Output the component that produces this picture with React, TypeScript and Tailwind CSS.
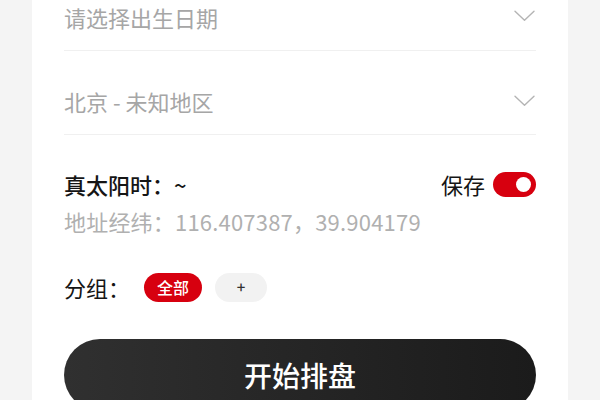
import React from "react";

function Chevron() {
  return (
    <svg width="21" height="12" viewBox="0 0 21 12" fill="none">
      <path d="M1 1.2 L10.5 10.2 L20 1.2" stroke="#b4b4b4" strokeWidth="1.4" strokeLinecap="round" strokeLinejoin="round" />
    </svg>
  );
}

export default function App() {
  return (
    <div
      className="h-[400px] w-[600px] overflow-hidden bg-[#f4f4f4]"
      style={{ fontFamily: '"Noto Sans CJK SC", "Noto Sans", sans-serif' }}
    >
      <div className="mx-8 -mt-[33px] bg-white px-8 pb-10">
        <div className="flex items-center justify-between border-b border-[#f0f0f0] pt-[35px] pb-[18px]">
          <span className="text-[22px] leading-[30px] text-[#a6a6a6]">请选择出生日期</span>
          <span className="mr-[1px] -mt-[2px]"><Chevron /></span>
        </div>
        <div className="flex items-center justify-between border-b border-[#f0f0f0] pt-[35px] pb-[18px]">
          <span className="text-[22px] leading-[30px] text-[#a6a6a6]">北京 - 未知地区</span>
          <span className="mr-[1px]"><Chevron /></span>
        </div>
        <div className="pt-[34px]">
          <div className="flex items-center justify-between">
            <span className="text-[22px] font-medium leading-[30px] text-[#151515]">真太阳时：~</span>
            <div className="flex items-center gap-2">
              <span className="text-[22px] leading-[30px] text-[#151515]">保存</span>
              <div className="flex h-[25px] w-[43px] items-center justify-end rounded-full bg-[#d7000f] pr-[5px]">
                <div className="h-[15px] w-[15px] rounded-full bg-white" />
              </div>
            </div>
          </div>
          <div className="mt-[7px] text-[22px] leading-[30px] tracking-[0.2px] text-[#b0b0b0]">地址经纬：116.407387，39.904179</div>
          <div className="mt-[36px] flex h-[30px] items-center">
            <span className="w-[80px] text-[22px] leading-[30px] text-[#151515]">分组：</span>
            <span className="flex h-[29px] w-[58px] items-center justify-center rounded-full bg-[#d7000f] text-[16px] font-medium text-white">全部</span>
            <span className="ml-[13px] flex h-[29px] w-[52px] items-center justify-center rounded-full bg-[#f2f2f2] text-[15px] font-medium text-[#333]">+</span>
          </div>
          <button className="mt-[37px] flex h-[72px] w-full items-center justify-center rounded-full bg-gradient-to-r from-[#303030] to-[#1b1b1b] text-[28px] font-medium text-white">
            开始排盘
          </button>
        </div>
      </div>
    </div>
  );
}
